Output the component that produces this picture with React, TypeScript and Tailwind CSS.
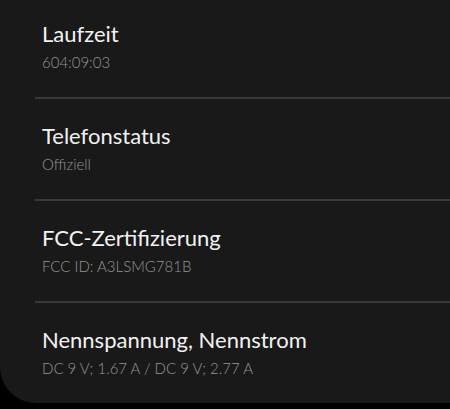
import React from "react";

const items = [
  { title: "Laufzeit", sub: "604:09:03" },
  { title: "Telefonstatus", sub: "Offiziell" },
  { title: "FCC-Zertifizierung", sub: "FCC ID: A3LSMG781B" },
  { title: "Nennspannung, Nennstrom", sub: "DC 9 V; 1.67 A / DC 9 V; 2.77 A" },
];

export default function App() {
  return (
    <div className="w-[450px] h-[409px] bg-black overflow-hidden font-['Lato',sans-serif]">
      <div className="w-[450px] h-[403px] bg-[#191919] rounded-bl-[36px] flex flex-col">
        {items.map((it, i) => (
          <div key={it.title} className="flex flex-col">
            {i > 0 && <div className="ml-[35px] h-[2px] bg-[#393939]" />}
            <div className={`flex flex-col px-[42px] ${i === 0 ? "h-[97px] pt-[20px]" : "h-[100px] pt-[23px]"}`}>
              <div className="text-[22px] leading-[28px] text-[#f2f2f2]">{it.title}</div>
              <div className="mt-[4px] text-[15px] leading-[20px] font-light text-[#959595]">{it.sub}</div>
            </div>
          </div>
        ))}
      </div>
    </div>
  );
}
